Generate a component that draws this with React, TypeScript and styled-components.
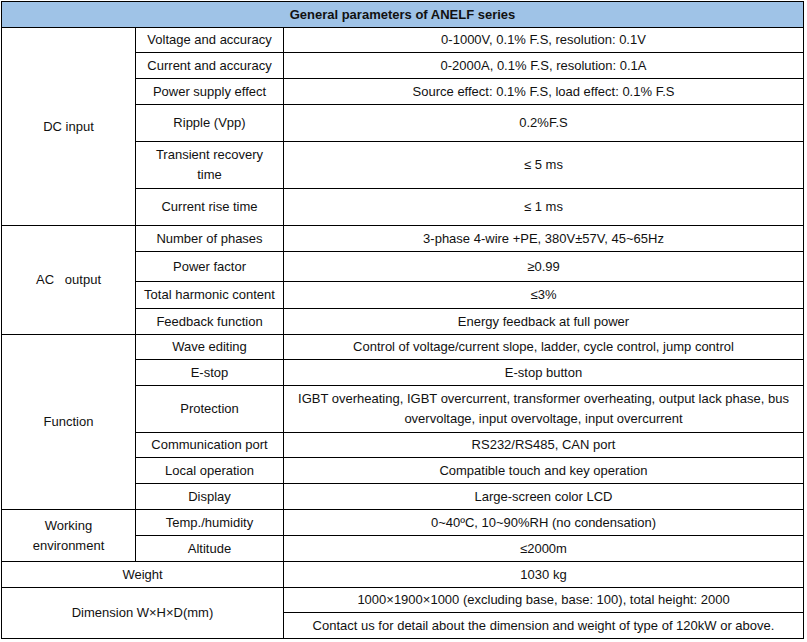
import React from "react";
import styled, { createGlobalStyle } from "styled-components";

const Global = createGlobalStyle`
  html, body { margin: 0; padding: 0; background: #ffffff; }
  body { font-family: "Liberation Sans", Arial, sans-serif; color: #111; }
`;

const Page = styled.div`
  padding: 1px 0 0 1px;
`;

const Table = styled.table`
  border-collapse: collapse;
  table-layout: fixed;
  width: 802px;
  font-size: 13px;
  line-height: 20px;
`;

const Row = styled.tr<{ $h: number }>`
  height: ${(p) => p.$h}px;
`;

const Cell = styled.td`
  border: 1px solid #000;
  text-align: center;
  vertical-align: middle;
  padding: 0 3px;
  white-space: pre-wrap;
`;

const HeadCell = styled.th`
  border: 1px solid #000;
  background: #9fc3e7;
  font-weight: bold;
  text-align: center;
  vertical-align: middle;
  padding: 0 5px;
`;

type Sub = { label: string; value: string; h: number };
type Group = { title: string; rows: Sub[] };

const groups: Group[] = [
  {
    title: "DC input",
    rows: [
      { label: "Voltage and accuracy", value: "0-1000V, 0.1% F.S, resolution: 0.1V", h: 25 },
      { label: "Current and accuracy", value: "0-2000A, 0.1% F.S, resolution: 0.1A", h: 26 },
      { label: "Power supply effect", value: "Source effect: 0.1% F.S, load effect: 0.1% F.S", h: 26 },
      { label: "Ripple (Vpp)", value: "0.2%F.S", h: 37 },
      { label: "Transient recovery\ntime", value: "≤ 5 ms", h: 47 },
      { label: "Current rise time", value: "≤ 1 ms", h: 37 },
    ],
  },
  {
    title: "AC\u00a0\u00a0 output",
    rows: [
      { label: "Number of phases", value: "3-phase 4-wire +PE, 380V±57V, 45~65Hz", h: 26 },
      { label: "Power factor", value: "≥0.99", h: 30 },
      { label: "Total harmonic content", value: "≤3%", h: 27 },
      { label: "Feedback function", value: "Energy feedback at full power", h: 26 },
    ],
  },
  {
    title: "Function",
    rows: [
      { label: "Wave editing", value: "Control of voltage/current slope, ladder, cycle control, jump control", h: 25 },
      { label: "E-stop", value: "E-stop button", h: 26 },
      {
        label: "Protection",
        value:
          "IGBT overheating, IGBT overcurrent, transformer overheating, output lack phase, bus overvoltage, input overvoltage, input overcurrent",
        h: 47,
      },
      { label: "Communication port", value: "RS232/RS485, CAN port", h: 25 },
      { label: "Local operation", value: "Compatible touch and key operation", h: 26 },
      { label: "Display", value: "Large-screen color LCD", h: 26 },
    ],
  },
  {
    title: "Working\nenvironment",
    rows: [
      { label: "Temp./humidity", value: "0~40ºC, 10~90%RH (no condensation)", h: 26 },
      { label: "Altitude", value: "≤2000m", h: 26 },
    ],
  },
];

const WideCell = styled(Cell)`
  padding: 0 6px;
`;

export default function App() {
  return (
    <Page>
      <Global />
      <Table>
        <colgroup>
          <col style={{ width: 134 }} />
          <col style={{ width: 148 }} />
          <col style={{ width: 520 }} />
        </colgroup>
        <tbody>
          <Row $h={26}>
            <HeadCell colSpan={3}>General parameters of ANELF series</HeadCell>
          </Row>
          {groups.map((g) =>
            g.rows.map((r, i) => (
              <Row $h={r.h} key={g.title + r.label}>
                {i === 0 && <Cell rowSpan={g.rows.length}>{g.title}</Cell>}
                <Cell>{r.label}</Cell>
                <WideCell>{r.value}</WideCell>
              </Row>
            ))
          )}
          <Row $h={26}>
            <Cell colSpan={2}>Weight</Cell>
            <WideCell>1030 kg</WideCell>
          </Row>
          <Row $h={25}>
            <Cell colSpan={2} rowSpan={2}>
              Dimension W×H×D(mm)
            </Cell>
            <WideCell>1000×1900×1000 (excluding base, base: 100), total height: 2000</WideCell>
          </Row>
          <Row $h={26}>
            <WideCell>Contact us for detail about the dimension and weight of type of 120kW or above.</WideCell>
          </Row>
        </tbody>
      </Table>
    </Page>
  );
}
